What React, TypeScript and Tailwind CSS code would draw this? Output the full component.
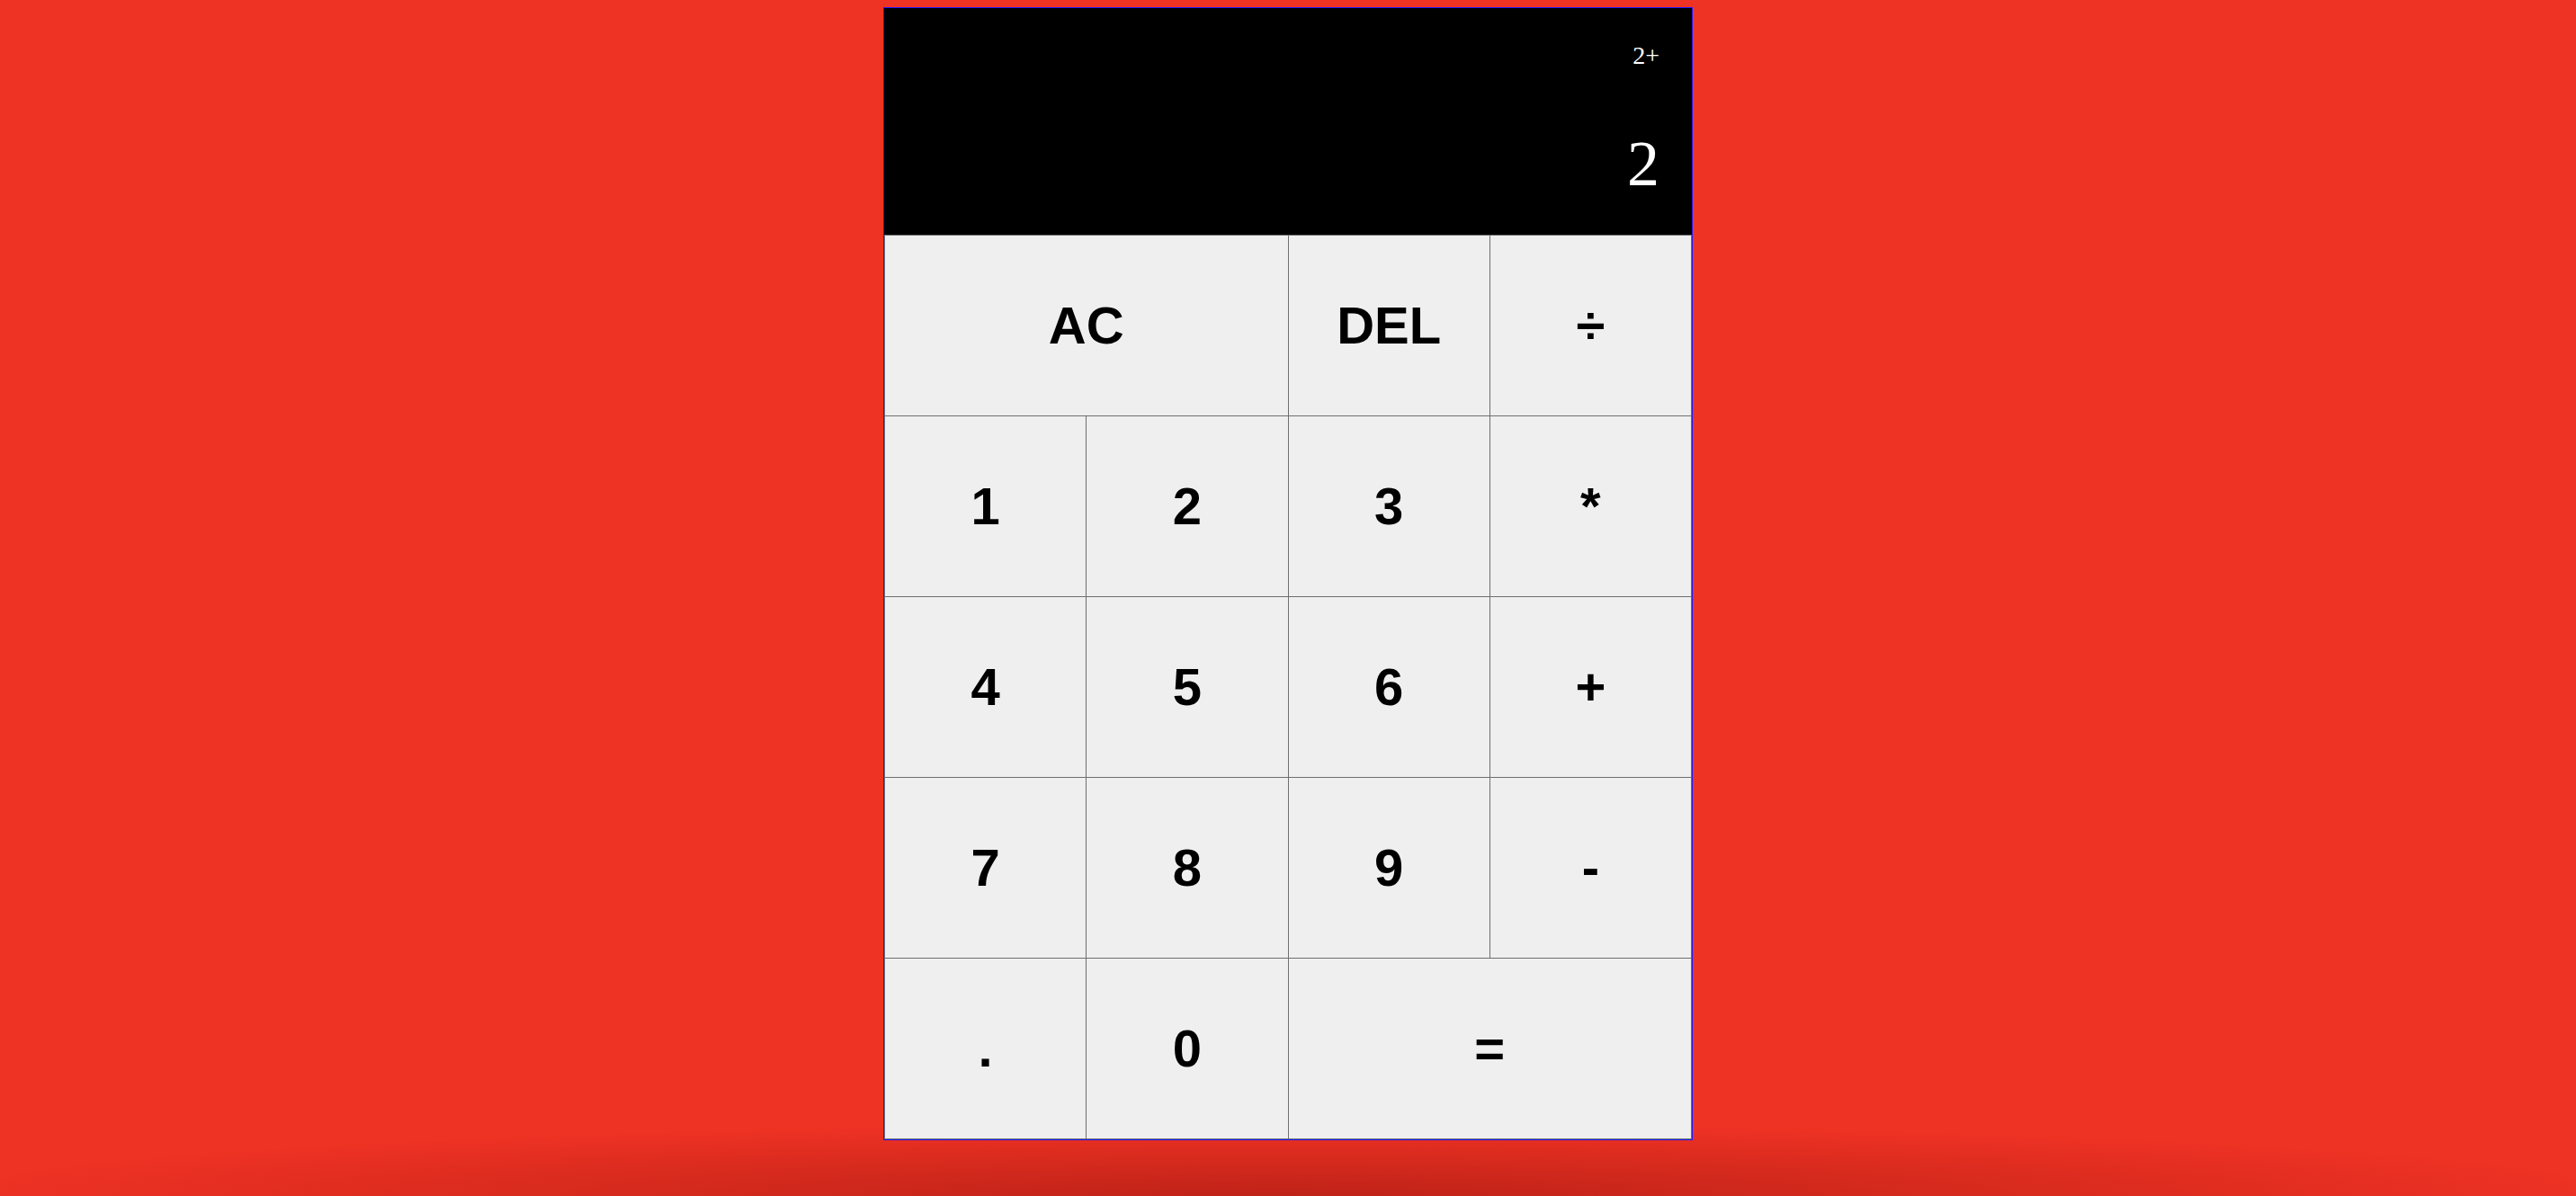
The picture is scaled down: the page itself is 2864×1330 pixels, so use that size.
import React from "react";

const btn =
  "flex items-center justify-center bg-[#efefef] text-black font-bold text-[58px] leading-none font-['Liberation_Sans',Arial,sans-serif]";

export default function App() {
  const keys: { label: string; span?: boolean }[] = [
    { label: "AC", span: true },
    { label: "DEL" },
    { label: "÷" },
    { label: "1" },
    { label: "2" },
    { label: "3" },
    { label: "*" },
    { label: "4" },
    { label: "5" },
    { label: "6" },
    { label: "+" },
    { label: "7" },
    { label: "8" },
    { label: "9" },
    { label: "-" },
    { label: "." },
    { label: "0" },
    { label: "=", span: true },
  ];
  return (
    <div className="relative w-full h-[1330px] overflow-hidden bg-[#ee3224] bg-[radial-gradient(ellipse_1500px_80px_at_50%_100%,rgba(120,10,5,0.4),rgba(120,10,5,0)_100%)] pt-[8px]">
      <div className="mx-auto w-[900px] border border-[#1a1aff]">
        <div className="h-[252px] bg-black flex flex-col items-end pr-[36px] font-['Liberation_Serif','Times_New_Roman',serif] text-white">
          <div className="mt-[39px] text-[28px] leading-none">2+</div>
          <div className="mt-[70px] text-[72px] leading-none">2</div>
        </div>
        <div className="grid grid-cols-4 grid-rows-[repeat(5,200px)] gap-px bg-[#6e6e6e] border border-[#6e6e6e]">
          {keys.map((k, i) => (
            <button key={i} className={`${btn} ${k.span ? "col-span-2" : ""}`}>
              {k.label}
            </button>
          ))}
        </div>
      </div>
    </div>
  );
}
